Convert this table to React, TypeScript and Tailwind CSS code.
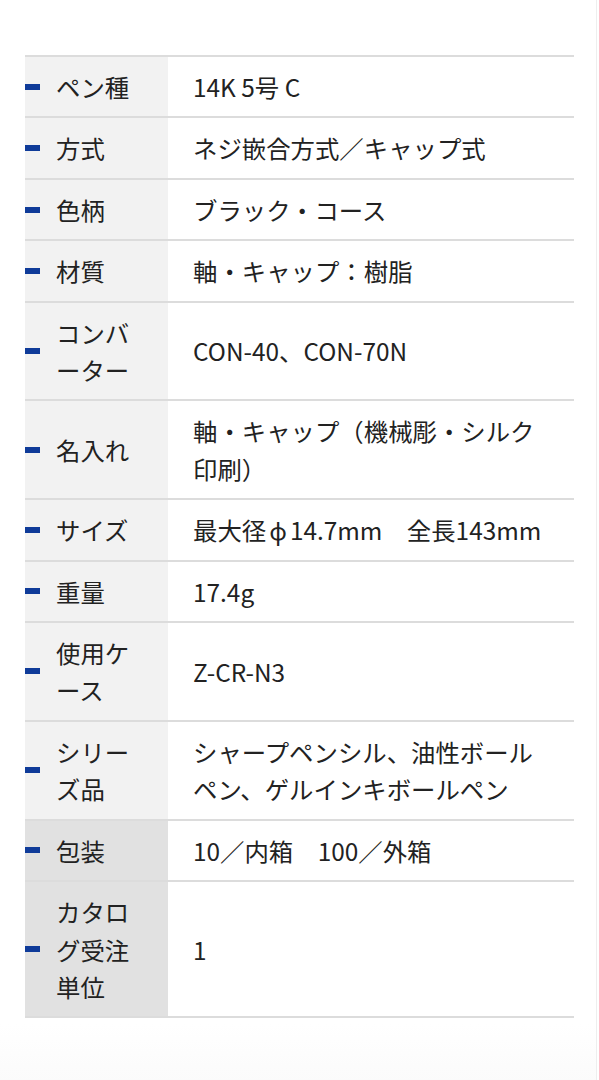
import React from 'react'

type Spec = {
  label: string
  value: React.ReactNode
  dark?: boolean
}

const SPECS: Spec[] = [
  { label: 'ペン種', value: '14K 5号 C' },
  { label: '方式', value: 'ネジ嵌合方式／キャップ式' },
  { label: '色柄', value: 'ブラック・コース' },
  { label: '材質', value: '軸・キャップ：樹脂' },
  { label: 'コンバーター', value: 'CON-40、CON-70N' },
  { label: '名入れ', value: '軸・キャップ（機械彫・シルク印刷）' },
  {
    label: 'サイズ',
    value: (
      <>
        最大径<span className="mx-[3px]">ϕ</span>14.7mm　全長143mm
      </>
    ),
  },
  { label: '重量', value: '17.4g' },
  { label: '使用ケース', value: 'Z-CR-N3' },
  { label: 'シリーズ品', value: 'シャープペンシル、油性ボールペン、ゲルインキボールペン' },
  { label: '包装', value: '10／内箱　100／外箱', dark: true },
  { label: 'カタログ受注単位', value: '1', dark: true },
]

function SpecRow({ spec }: { spec: Spec }) {
  return (
    <div className="flex border-b-2 border-[#dcdcdc]">
      {/* label cell */}
      <div
        className={`relative flex w-[143px] shrink-0 items-center py-[11px] pl-[31px] pr-[20px] ${
          spec.dark ? 'bg-[#e1e1e1]' : 'bg-[#f2f2f2]'
        }`}
      >
        <span className="absolute left-0 top-1/2 h-[6px] w-[15px] -translate-y-1/2 bg-[#0f3b99]" />
        <span className="break-all">{spec.label}</span>
      </div>
      {/* value cell */}
      <div className="flex flex-1 items-center bg-white py-[11px] pl-[25px] pr-[22px]">
        <span>{spec.value}</span>
      </div>
    </div>
  )
}

export default function App() {
  return (
    <div
      className="min-h-[1080px] w-[597px] border-r border-[#eeeeee] bg-white pt-[55px] text-[24.4px] leading-[37.4px] text-[#222222]"
      style={{ fontFamily: '"Noto Sans CJK JP", "Noto Sans", sans-serif' }}
    >
      <div className="mx-[25px] w-[549px] border-t-2 border-[#dcdcdc]">
        {SPECS.map((s) => (
          <SpecRow key={s.label} spec={s} />
        ))}
      </div>
      <div className="mt-[6px] h-[58px] bg-gradient-to-b from-white to-[#fbfbfb]" />
    </div>
  )
}
